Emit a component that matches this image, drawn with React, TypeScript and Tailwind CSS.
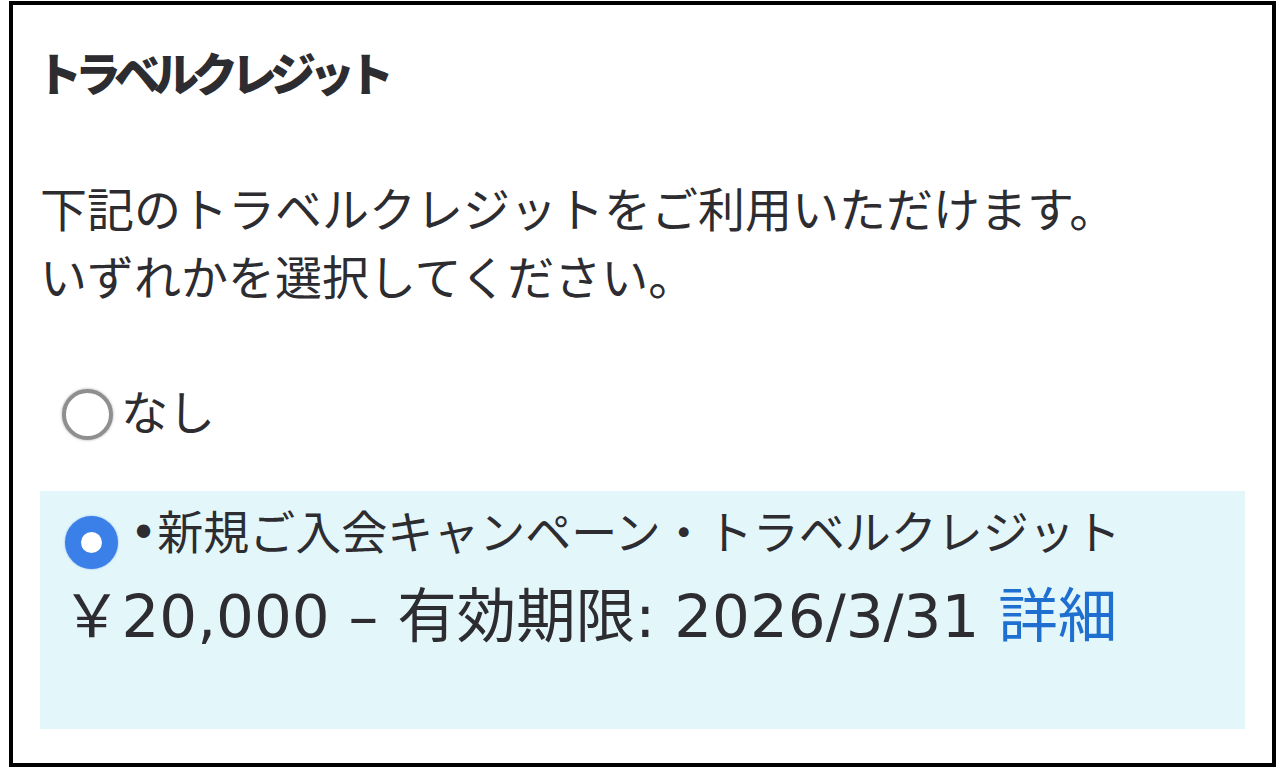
const font = { fontFamily: '"DejaVu Sans", "Noto Sans CJK JP", sans-serif' };

function Radio({ checked }: { checked: boolean }) {
  if (checked) {
    return (
      <span className="flex h-[53px] w-[53px] shrink-0 items-center justify-center rounded-full bg-[#3b7fe9] shadow-[0_0_2px_rgba(59,127,233,0.6)]">
        <span className="h-[21px] w-[21px] rounded-full bg-white" />
      </span>
    );
  }
  return (
    <span className="h-[51px] w-[51px] shrink-0 rounded-full border-[4px] border-[#8f8f8f] bg-white shadow-[0_0_3px_rgba(0,0,0,0.35)]" />
  );
}

export default function App() {
  return (
    <div className="h-[770px] w-[1279px] bg-white pl-[9px] pt-[1px] text-[#2c2c31]" style={font}>
      <div className="flex h-[766px] w-[1267px] flex-col border-[4px] border-black px-[27px]">
        <h2 className="ml-[-4px] mt-[47px] text-[46px] font-black leading-[46px] tracking-[-7px]">トラベルクレジット</h2>

        <p className="mt-[79px] text-[47px] leading-[68px]">
          下記のトラベルクレジットをご利用いただけます。
          <br />
          いずれかを選択してください。
        </p>

        <label className="mt-[73px] flex h-[56px] items-center gap-[8px] pl-[22px]">
          <Radio checked={false} />
          <span className="text-[47px] leading-[56px]">なし</span>
        </label>

        <div className="mt-[49px] h-[238px] bg-[#e3f6fa] pt-[12px]">
          <label className="flex items-start pl-[25px]">
            <span className="mt-[13px]">
              <Radio checked />
            </span>
            <span className="ml-[12px] text-[46px] leading-[60px]">•新規ご入会キャンペーン・トラベルクレジット</span>
          </label>
          <p className="mt-[13px] pl-[22px] text-[59.5px] leading-[70px]">
            ￥20,000 – 有効期限: 2026/3/31 <a className="text-[#1e6fd0]">詳細</a>
          </p>
        </div>
      </div>
    </div>
  );
}
